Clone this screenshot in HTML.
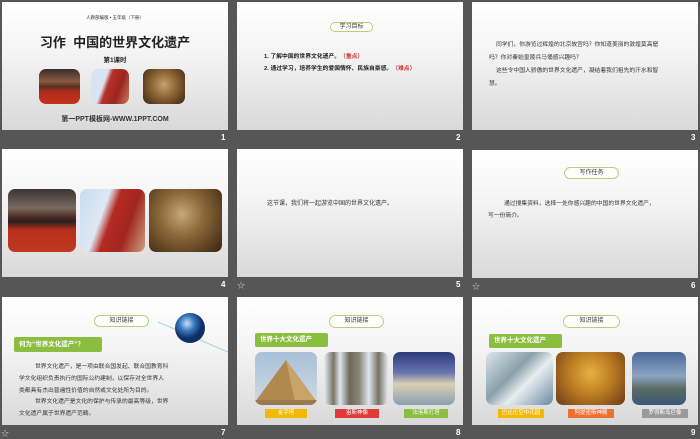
<!DOCTYPE html>
<html><head><meta charset="utf-8"><style>
*{margin:0;padding:0;box-sizing:border-box}
body{width:700px;height:438px;background:#565656;position:relative;overflow:hidden;font-family:"Liberation Sans","Noto Sans CJK SC",sans-serif}
.s{position:absolute;width:226px;height:128px;background:linear-gradient(#ffffff 0%,#f4f4f4 40%,#d9d9d9 100%);overflow:hidden}
.a{position:absolute}
.n{position:absolute;color:#fff;font-size:8px;font-weight:bold}
.star{position:absolute;color:#ccc;font-size:8px}
.pill{position:absolute;border:1.5px solid #b5cf7a;border-radius:8px;background:#fff;font-size:6px;color:#333;text-align:center}
.g{position:absolute;background:#8bbd3e;color:#fff;font-size:6.5px;font-weight:bold;padding-left:5px;border-radius:2px}
.t{position:absolute;font-size:5.8px;color:#333;white-space:nowrap}
.im{position:absolute;border-radius:7px;overflow:hidden}
.lb{position:absolute;font-size:5.5px;color:#fff;text-align:center;height:9px;line-height:9px}
</style></head><body>

<div class="s" style="left:2px;top:2px">
 <div class="a" style="left:0;width:226px;top:13px;text-align:center;font-size:4.5px;color:#333">人教部编版 • 五年级（下册）</div>
 <div class="a" style="left:0;width:226px;top:30px;text-align:center;font-size:13px;font-weight:bold;color:#222">习作&nbsp;&nbsp;中国的世界文化遗产</div>
 <div class="a" style="left:0;width:226px;top:52px;text-align:center;font-size:6.5px;font-weight:bold;color:#222">第1课时</div>
 <div class="im" style="left:37px;top:67px;width:41px;height:35px;background:linear-gradient(#3a2a2a 0%,#8a5a40 35%,#5a3020 50%,#b02a1a 65%,#c0341c 100%)"></div>
 <div class="im" style="left:89px;top:67px;width:38px;height:35px;background:linear-gradient(110deg,#d9e4f2 0%,#d9e4f2 35%,#b8302a 45%,#9a2620 70%,#c87a60 100%)"></div>
 <div class="im" style="left:141px;top:67px;width:42px;height:35px;background:radial-gradient(circle at 50% 45%,#c8a070 0%,#8a6434 45%,#3a2410 100%)"></div>
 <div class="a" style="left:0;width:226px;top:112px;text-align:center;font-size:7px;font-weight:bold;color:#333">第一PPT模板网-WWW.1PPT.COM</div>
</div>
<div class="n" style="left:221px;top:133px">1</div>

<div class="s" style="left:237px;top:2px">
 <div class="pill" style="left:93px;top:20px;width:43px;height:10px;line-height:8px">学习目标</div>
 <div class="t" style="left:27px;top:49px;font-weight:bold;color:#222">1. 了解中国的世界文化遗产。<span style="color:#d03030">（重点）</span></div>
 <div class="t" style="left:27px;top:61px;font-weight:bold;color:#222">2. 通过学习，培养学生的爱国情怀、民族自豪感。<span style="color:#d03030">（难点）</span></div>
</div>
<div class="n" style="left:456px;top:133px">2</div>

<div class="s" style="left:472px;top:2px">
 <div class="t" style="left:24px;top:37px">同学们，你游览过辉煌的北京故宫吗？你知道美丽的敦煌莫高窟</div>
 <div class="t" style="left:17px;top:50px">吗？你对秦始皇陵兵马俑感兴趣吗？</div>
 <div class="t" style="left:24px;top:63px">这些令中国人骄傲的世界文化遗产，凝结着我们祖先的汗水和智</div>
 <div class="t" style="left:17px;top:76px">慧。</div>
</div>
<div class="n" style="left:691px;top:133px">3</div>

<div class="s" style="left:2px;top:149px">
 <div class="im" style="left:6px;top:40px;width:68px;height:63px;background:linear-gradient(#3a3535 0%,#7a6a60 30%,#4a2a20 45%,#2a2020 52%,#b8301c 65%,#c0381e 100%)"></div>
 <div class="im" style="left:78px;top:40px;width:65px;height:63px;background:linear-gradient(110deg,#c8dcf0 0%,#dfe8f4 35%,#b52a22 48%,#a02620 70%,#d0a080 100%)"></div>
 <div class="im" style="left:147px;top:40px;width:73px;height:63px;background:radial-gradient(circle at 45% 40%,#c8a878 0%,#8a6838 40%,#3a2210 100%)"></div>
</div>
<div class="n" style="left:221px;top:280px">4</div>

<div class="s" style="left:237px;top:149px">
 <div class="t" style="left:30px;top:49px;font-size:6px">这节课，我们将一起游览中国的世界文化遗产。</div>
</div>
<div class="star" style="left:237px;top:280px">☆</div>
<div class="n" style="left:456px;top:280px">5</div>

<div class="s" style="left:472px;top:150px">
 <div class="pill" style="left:92px;top:17px;width:55px;height:12px;line-height:10px">写作任务</div>
 <div class="t" style="left:32px;top:48px">通过搜集资料，选择一处你感兴趣的中国的世界文化遗产，</div>
 <div class="t" style="left:16px;top:60px">写一份简介。</div>
</div>
<div class="star" style="left:472px;top:281px">☆</div>
<div class="n" style="left:691px;top:281px">6</div>

<div class="s" style="left:2px;top:297px">
 <div class="pill" style="left:92px;top:18px;width:55px;height:12px;line-height:10px">知识链接</div>
 <svg class="a" style="left:150px;top:10px" width="76" height="45"><defs><radialGradient id="gl" cx="40%" cy="35%"><stop offset="0" stop-color="#c8e0f8"/><stop offset="0.5" stop-color="#3a78c0"/><stop offset="1" stop-color="#0e2e66"/></radialGradient></defs><line x1="6" y1="15" x2="76" y2="45" stroke="#8fc6e6" stroke-width="0.8"/><circle cx="38" cy="21" r="15" fill="url(#gl)"/></svg>
 <div class="g" style="left:12px;top:40px;width:88px;height:15px;line-height:15px">何为“世界文化遗产”？</div>
 <div class="t" style="left:33px;top:64px">世界文化遗产，是一项由联合国发起、联合国教育科</div>
 <div class="t" style="left:17px;top:76px">学文化组织负责执行的国际公约建制，以保存对全世界人</div>
 <div class="t" style="left:17px;top:88px">类都具有杰出普遍性价值的自然或文化处所为目的。</div>
 <div class="t" style="left:33px;top:99px">世界文化遗产是文化的保护与传承的最高等级，世界</div>
 <div class="t" style="left:17px;top:111px">文化遗产属于世界遗产范畴。</div>
</div>
<div class="star" style="left:1px;top:428px">☆</div>
<div class="n" style="left:221px;top:428px">7</div>

<div class="s" style="left:237px;top:297px">
 <div class="pill" style="left:92px;top:18px;width:55px;height:13px;line-height:11px">知识链接</div>
 <div class="g" style="left:18px;top:36px;width:73px;height:14px;line-height:14px">世界十大文化遗产</div>
 <div class="im" style="left:18px;top:55px;width:62px;height:53px;background:linear-gradient(#a8c0d8 0%,#d0dae4 100%)"><svg width="62" height="53"><polygon points="31,8 62,50 0,50" fill="#b08850"/><polygon points="31,8 62,50 40,50" fill="#c8a468"/><rect y="48" width="62" height="5" fill="#9a7a50"/></svg></div>
 <div class="im" style="left:87px;top:55px;width:64px;height:53px;background:linear-gradient(90deg,#e8eef4 0%,#7a7468 15%,#e0e6ee 25%,#6e685c 40%,#8a8476 55%,#dfe6ee 70%,#787064 85%,#e4eaf0 100%)"></div>
 <div class="im" style="left:156px;top:55px;width:62px;height:53px;background:linear-gradient(#2a3a7a 0%,#6a78b0 40%,#d8d0b0 60%,#8aa0b0 100%)"></div>
 <div class="lb" style="left:28px;top:112px;width:42px;background:#f5b800">金字塔</div>
 <div class="lb" style="left:98px;top:112px;width:44px;background:#e03a3a">宙斯神像</div>
 <div class="lb" style="left:167px;top:112px;width:44px;background:#8bbd3e">法洛斯灯塔</div>
</div>
<div class="n" style="left:456px;top:428px">8</div>

<div class="s" style="left:472px;top:297px">
 <div class="pill" style="left:91px;top:18px;width:57px;height:13px;line-height:11px">知识链接</div>
 <div class="g" style="left:17px;top:37px;width:73px;height:14px;line-height:14px">世界十大文化遗产</div>
 <div class="im" style="left:14px;top:55px;width:67px;height:53px;background:linear-gradient(135deg,#dde6ee 0%,#8aa0a8 40%,#e8eef0 60%,#6a8aa0 100%)"></div>
 <div class="im" style="left:84px;top:55px;width:69px;height:53px;background:radial-gradient(circle at 50% 40%,#e8b040 0%,#b87820 50%,#6a3a18 100%)"></div>
 <div class="im" style="left:160px;top:55px;width:54px;height:53px;background:linear-gradient(#4a6a9a 0%,#8aa4c0 45%,#5a6a60 70%,#3a5a7a 100%)"></div>
 <div class="lb" style="left:26px;top:112px;width:46px;background:#f5b800">巴比伦空中花园</div>
 <div class="lb" style="left:96px;top:112px;width:46px;background:#ee7030">阿提密斯神殿</div>
 <div class="lb" style="left:170px;top:112px;width:46px;background:#9a9a9a">罗得斯岛巨像</div>
</div>
<div class="n" style="left:691px;top:428px">9</div>

</body></html>
